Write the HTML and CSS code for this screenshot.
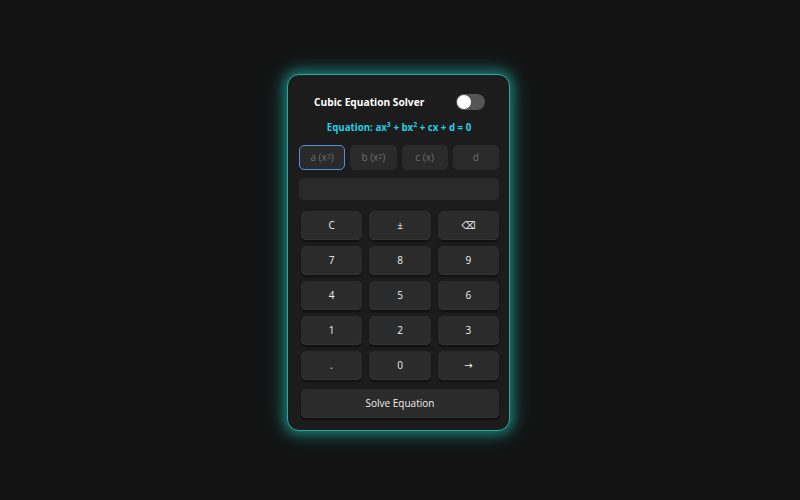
FILE: index.html
```html
<!DOCTYPE html>
<html>
<head>
<meta charset="utf-8">
<link rel="stylesheet" href="styles.css">
</head>
<body>
<div class="stage">
  <div class="card">
    <div class="header">
      <span class="title">Cubic Equation Solver</span>
      <span class="toggle"><span class="knob"></span></span>
    </div>
    <div class="equation">Equation: ax<sup>3</sup> + bx<sup>2</sup> + cx + d = 0</div>
    <div class="inputs">
      <div class="coef active">a (x<sup>3</sup>)</div>
      <div class="coef">b (x<sup>2</sup>)</div>
      <div class="coef">c (x)</div>
      <div class="coef">d</div>
    </div>
    <div class="display"></div>
    <div class="keypad">
      <button class="key">C</button>
      <button class="key">±</button>
      <button class="key">⌫</button>
      <button class="key">7</button>
      <button class="key">8</button>
      <button class="key">9</button>
      <button class="key">4</button>
      <button class="key">5</button>
      <button class="key">6</button>
      <button class="key">1</button>
      <button class="key">2</button>
      <button class="key">3</button>
      <button class="key">.</button>
      <button class="key">0</button>
      <button class="key">→</button>
      <button class="key solve">Solve Equation</button>
    </div>
  </div>
</div>
</body>
</html>
```

FILE: styles.css
```css
html, body {
  margin: 0;
  padding: 0;
  background: #131313;
  font-family: "Open Sans", "Noto Sans", sans-serif;
}
.stage {
  width: 800px;
  height: 500px;
  display: flex;
  align-items: center;
  justify-content: center;
}
.card {
  box-sizing: border-box;
  width: 223px;
  height: 357px;
  margin: 4px 3px 0 0;
  background: #1c1c1c;
  border: 1px solid #28a9a0;
  border-radius: 12px;
  box-shadow: 0 0 12px 3px rgba(32, 190, 178, 0.55), 0 0 22px 6px rgba(32, 190, 178, 0.2);
  padding: 0 10px 0 11px;
  display: flex;
  flex-direction: column;
}
.header {
  display: flex;
  justify-content: space-between;
  align-items: center;
  padding: 18px 14px 0 15px;
  height: 18px;
}
.title {
  color: #ffffff;
  font-weight: 700;
  font-size: 10.2px;
}
.toggle {
  position: relative;
  width: 29px;
  height: 16px;
  border-radius: 8px;
  background: #555555;
}
.knob {
  position: absolute;
  left: 1px;
  top: 1px;
  width: 14px;
  height: 14px;
  border-radius: 50%;
  background: #ffffff;
}
.equation {
  margin-top: 10px;
  text-align: center;
  color: #22cfe6;
  font-weight: 700;
  font-size: 9.7px;
  line-height: 14px;
}
sup {
  font-size: 7px;
  line-height: 0;
  vertical-align: 4px;
}
.inputs {
  margin-top: 10px;
  display: grid;
  grid-template-columns: repeat(4, 1fr);
  gap: 5px;
}
.coef {
  box-sizing: border-box;
  height: 25px;
  border-radius: 5px;
  background: #2a2a2a;
  border: 1px solid #2a2a2a;
  color: #6e6e6e;
  font-size: 10px;
  display: flex;
  align-items: center;
  justify-content: center;
}
.coef.active {
  border-color: #4a93d8;
}
.display {
  margin-top: 8px;
  height: 22px;
  border-radius: 5px;
  background: #2a2a2a;
}
.keypad {
  margin-top: 11px;
  padding-left: 2px;
  display: grid;
  grid-template-columns: repeat(3, 1fr);
  column-gap: 7px;
  row-gap: 6px;
}
.key {
  height: 29px;
  border: none;
  border-radius: 5px;
  background: #2b2b2b;
  box-shadow: 0 2px 2px rgba(0, 0, 0, 0.45), inset 0 -1px 0 #333333;
  color: #f0f0f0;
  font-family: "Open Sans", "Noto Sans", "DejaVu Sans", sans-serif;
  font-size: 10px;
  padding: 0;
}
.key.solve {
  grid-column: 1 / -1;
  margin-top: 3px;
}
```
